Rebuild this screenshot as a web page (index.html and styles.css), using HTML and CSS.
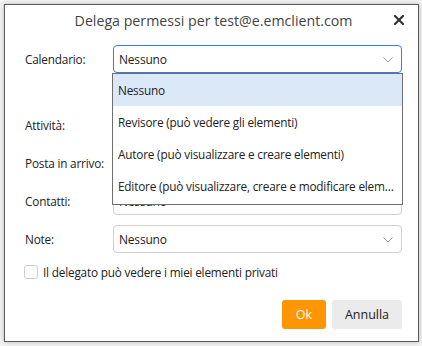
FILE: index.html
```html
<!DOCTYPE html>
<html lang="it">
<head>
    <meta charset="UTF-8">
    <title>Delega permessi</title>
    <link rel="stylesheet" href="styles.css">
</head>
<body>
    <div class="dialog">
        <div class="dialog-header">
            <h1 class="dialog-title">Delega permessi per test@e.emclient.com</h1>
            <span class="close-btn">
                <svg width="10" height="10" viewBox="0 0 10 10"><path d="M1 1L9 9M9 1L1 9" stroke="#333" stroke-width="2.2" stroke-linecap="square"/></svg>
            </span>
        </div>
        <div class="form">
            <label class="field-label">Calendario:</label>
            <div class="field">
                <div class="select select-open">
                    <span>Nessuno</span>
                    <svg class="chevron" width="10" height="6" viewBox="0 0 10 6"><path d="M0.5 0.5L5 5L9.5 0.5" fill="none" stroke="#999" stroke-width="1"/></svg>
                </div>
                <ul class="dropdown">
                    <li class="selected">Nessuno</li>
                    <li>Revisore (può vedere gli elementi)</li>
                    <li>Autore (può visualizzare e creare elementi)</li>
                    <li>Editore (può visualizzare, creare e modificare elementi)</li>
                </ul>
            </div>

            <div class="spacer"></div>

            <label class="field-label">Attività:</label>
            <div class="field">
                <div class="select"><span>Nessuno</span></div>
            </div>

            <label class="field-label">Posta in arrivo:</label>
            <div class="field">
                <div class="select"><span>Nessuno</span></div>
            </div>

            <label class="field-label">Contatti:</label>
            <div class="field">
                <div class="select"><span>Nessuno</span></div>
            </div>

            <label class="field-label">Note:</label>
            <div class="field">
                <div class="select">
                    <span>Nessuno</span>
                    <svg class="chevron" width="10" height="6" viewBox="0 0 10 6"><path d="M0.5 0.5L5 5L9.5 0.5" fill="none" stroke="#999" stroke-width="1"/></svg>
                </div>
            </div>

            <label class="check-row">
                <span class="checkbox"></span>
                Il delegato può vedere i miei elementi privati
            </label>
        </div>
        <div class="buttons">
            <button class="btn btn-primary">Ok</button>
            <button class="btn">Annulla</button>
        </div>
    </div>
</body>
</html>
```

FILE: styles.css
```css
body {
    margin: 0;
    padding: 4px;
    background-color: #f4f4f4;
    font-family: "Open Sans", "Noto Sans", Arial, sans-serif;
    font-size: 11.8px;
    letter-spacing: -0.2px;
    color: #222;
}

.dialog {
    width: 415px;
    height: 338px;
    box-sizing: border-box;
    background-color: #ffffff;
    border: 1px solid #5a5a5a;
    box-shadow: 0 0 5px rgba(0, 0, 0, 0.25);
    padding: 0 16px 0 20px;
    display: flex;
    flex-direction: column;
}

.dialog-header {
    position: relative;
    height: 30px;
    margin-bottom: 10px;
    display: flex;
    justify-content: center;
    align-items: center;
}

.dialog-title {
    margin: 0;
    font-size: 14.2px;
    font-weight: normal;
    letter-spacing: 0;
    color: #444;
}

.close-btn {
    position: absolute;
    right: -2px;
    top: 10px;
    display: flex;
}

.form {
    display: grid;
    grid-template-columns: 88px 1fr;
    grid-template-rows: 28px 18px 28px 28px 28px 28px 18px;
    row-gap: 10px;
}

.field-label {
    display: flex;
    align-items: center;
    color: #222;
}

.field {
    position: relative;
}

.select {
    height: 28px;
    box-sizing: border-box;
    border: 1px solid #cfcfcf;
    border-radius: 4px;
    padding: 0 8px 0 5px;
    display: flex;
    align-items: center;
    justify-content: space-between;
    color: #222;
    font-size: 12px;
}

.select-open {
    border-color: #2f7fe6;
}

.chevron {
    margin-top: 1px;
}

.dropdown {
    position: absolute;
    top: 28px;
    left: -1px;
    right: -1px;
    z-index: 2;
    margin: 0;
    padding: 0 0 2px 0;
    list-style: none;
    background-color: #ffffff;
    border: 1px solid #6e6e6e;
}

.dropdown li {
    height: 32px;
    line-height: 33px;
    padding: 0 6px 0 5px;
    white-space: nowrap;
    overflow: hidden;
    text-overflow: ellipsis;
    font-size: 11.8px;
}

.dropdown li.selected {
    background-color: #dbe8f8;
}

.form .spacer {
    grid-column: 1 / 3;
}

.check-row {
    grid-column: 1 / 3;
    display: flex;
    align-items: center;
    gap: 5px;
}

.checkbox {
    width: 12px;
    height: 12px;
    border: 1px solid #cfcfcf;
    border-radius: 3px;
    margin-left: -1px;
}

.buttons {
    margin-top: auto;
    margin-bottom: 12px;
    display: flex;
    justify-content: flex-end;
    gap: 6px;
}

.btn {
    width: 70px;
    height: 29px;
    padding: 0;
    border: none;
    border-radius: 3px;
    background-color: #ebebeb;
    color: #222;
    font-family: inherit;
    font-size: 12.5px;
    letter-spacing: 0;
}

.btn-primary {
    width: 44px;
    background-color: #ff9500;
    color: #ffffff;
}
```
